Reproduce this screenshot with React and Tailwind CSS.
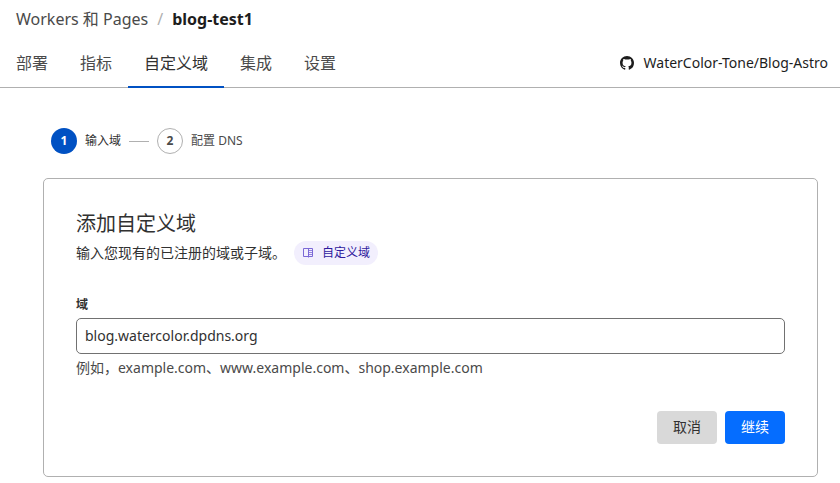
import { useState } from "react";

const tabs = ["部署", "指标", "自定义域", "集成", "设置"];

function GithubIcon({ className }) {
  return (
    <svg viewBox="0 0 16 16" fill="currentColor" className={className} aria-hidden="true">
      <path d="M8 0C3.58 0 0 3.58 0 8c0 3.54 2.29 6.53 5.47 7.59.4.07.55-.17.55-.38 0-.19-.01-.82-.01-1.49-2.01.37-2.53-.49-2.69-.94-.09-.23-.48-.94-.82-1.13-.28-.15-.68-.52-.01-.53.63-.01 1.08.58 1.23.82.72 1.21 1.87.87 2.33.66.07-.52.28-.87.51-1.07-1.78-.2-3.64-.89-3.64-3.95 0-.87.31-1.59.82-2.15-.08-.2-.36-1.02.08-2.12 0 0 .67-.21 2.2.82.64-.18 1.32-.27 2-.27s1.36.09 2 .27c1.53-1.04 2.2-.82 2.2-.82.44 1.1.16 1.92.08 2.12.51.56.82 1.27.82 2.15 0 3.07-1.87 3.75-3.65 3.95.29.25.54.73.54 1.48 0 1.07-.01 1.93-.01 2.2 0 .21.15.46.55.38A8.01 8.01 0 0 0 16 8c0-4.42-3.58-8-8-8Z" />
    </svg>
  );
}

function DocsIcon({ className }) {
  return (
    <svg viewBox="0 0 12 12" fill="none" stroke="currentColor" className={className} aria-hidden="true">
      <path d="M1.5 1.5h9v8h-9zM6.5 1.5v9" />
      <path d="M7 3.5h3M7 5.5h3M7 7.5h3" strokeWidth=".8" />
    </svg>
  );
}

export default function App() {
  const [activeTab, setActiveTab] = useState("自定义域");
  const [domain, setDomain] = useState("blog.watercolor.dpdns.org");

  return (
    <div className="min-h-screen bg-white pb-1.5 font-['Noto_Sans','Noto_Sans_CJK_SC',sans-serif] text-sm text-[#313131]">
      <header className="border-b border-[#b0b0b0]">
        <nav className="flex h-10 items-center gap-[9px] px-4 pb-0.5 text-base" aria-label="Breadcrumb">
          <a href="#workers" className="text-[#4a4a4a]">Workers 和 Pages</a>
          <span className="text-[#b0b0b0]">/</span>
          <span className="font-bold text-[#1d1d1d]">blog-test1</span>
        </nav>
        <div className="flex items-center justify-between pr-3">
          <nav className="-mb-px flex">
            {tabs.map((tab) => (
              <button
                key={tab}
                type="button"
                onClick={() => setActiveTab(tab)}
                className={`h-12 border-b-2 px-4 text-base ${
                  activeTab === tab
                    ? "border-[#0051c3] text-[#313131]"
                    : "border-transparent text-[#4a4a4a]"
                }`}
              >
                {tab}
              </button>
            ))}
          </nav>
          <a href="#repo" className="flex items-center gap-2.5 pb-0.5 text-[#1d1d1d]">
            <GithubIcon className="h-3.5 w-3.5" />
            WaterColor-Tone/Blog-Astro
          </a>
        </div>
      </header>

      <main className="pt-10 pr-[22px] pl-[43px]">
        <ol className="flex items-center gap-2 px-2 text-xs">
          <li className="flex items-center gap-2">
            <span className="flex h-[26px] w-[26px] items-center justify-center rounded-full bg-[#0051c3] font-bold text-white">
              1
            </span>
            输入域
          </li>
          <li className="h-px w-5 bg-[#b0b0b0]" aria-hidden="true" />
          <li className="flex items-center gap-2 text-[#4a4a4a]">
            <span className="flex h-[26px] w-[26px] items-center justify-center rounded-full border border-[#b0b0b0] font-bold">
              2
            </span>
            配置 DNS
          </li>
        </ol>

        <form
          onSubmit={(e) => e.preventDefault()}
          className="mt-6 rounded-[5px] border border-[#b0b0b0] p-8"
        >
          <h1 className="text-xl leading-[26px]">添加自定义域</h1>
          <div className="mt-1 flex items-center gap-2">
            <p>输入您现有的已注册的域或子域。</p>
            <a
              href="#docs"
              className="flex h-6 items-center gap-2 rounded-full bg-[#f2effd] px-2 text-xs text-[#2f1a9e]"
            >
              <DocsIcon className="h-3 w-3 text-[#7b68d6]" />
              自定义域
            </a>
          </div>

          <label htmlFor="domain" className="mt-8 block text-xs font-bold">
            域
          </label>
          <input
            id="domain"
            type="text"
            value={domain}
            onChange={(e) => setDomain(e.target.value)}
            className="mt-[5px] h-9 w-full rounded-[5px] border border-[#717171] px-2 pb-0.5 outline-none"
          />
          <p className="mt-1 text-[#4a4a4a]">
            例如，example.com、www.example.com、shop.example.com
          </p>

          <div className="mt-[33px] flex justify-end gap-2">
            <button type="button" className="h-[33px] rounded-[4px] bg-[#d9d9d9] px-4 pb-0.5">
              取消
            </button>
            <button type="submit" className="h-[33px] rounded-[4px] bg-[#056dff] px-4 pb-0.5 text-white">
              继续
            </button>
          </div>
        </form>
      </main>
    </div>
  );
}
